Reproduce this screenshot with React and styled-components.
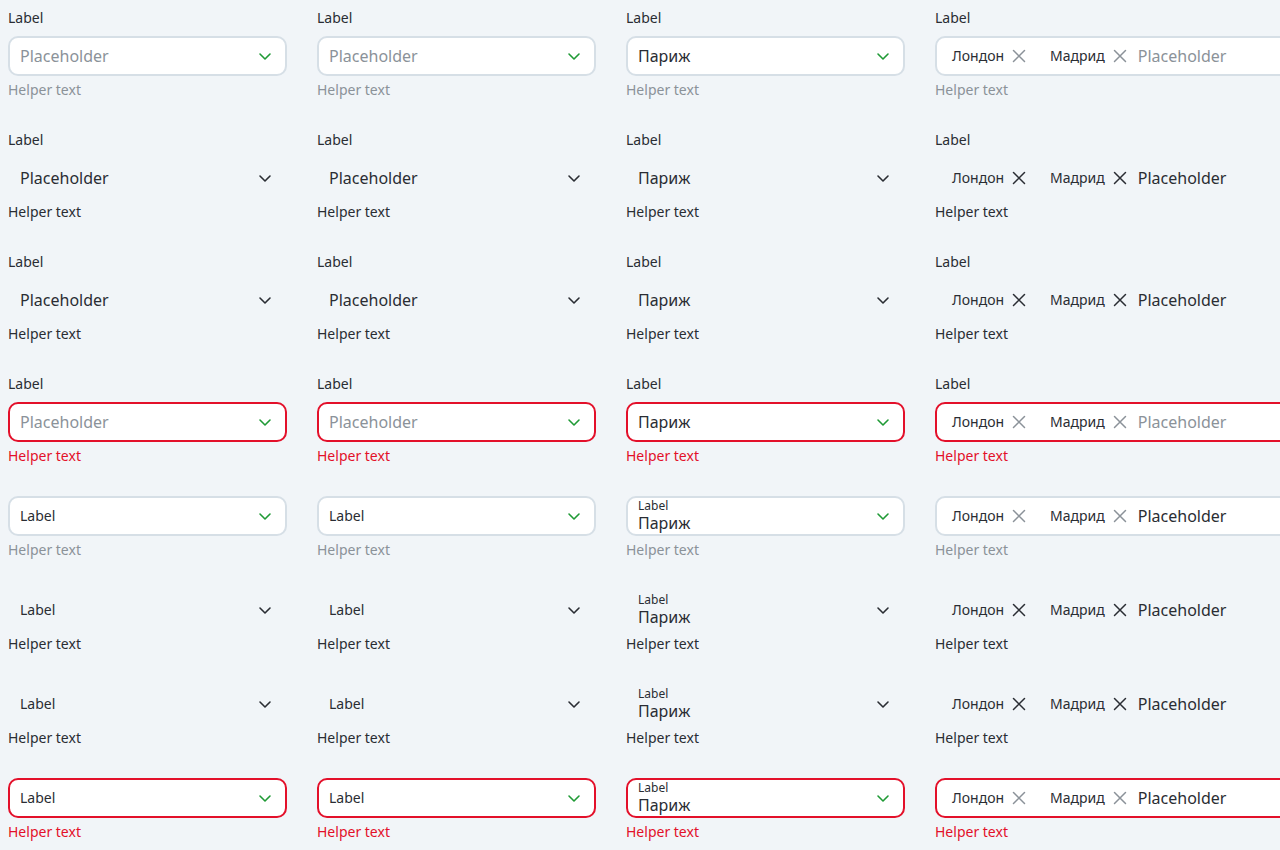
import React from "react";
import styled, { createGlobalStyle, css } from "styled-components";

const GlobalStyle = createGlobalStyle`
  html, body {
    overflow: hidden;
  }
  body {
    margin: 8px 0 8px 8px;
    background-color: #f1f5f8;
    font-family: "Noto Sans", "Open Sans", sans-serif;
    color: #2a2d33;
  }
`;

const COLORS = {
  text: "#2a2d33",
  muted: "#8b9299",
  border: "#d6dfe6",
  error: "#e3102a",
  green: "#1f9a35",
};

const ROW_STATES = ["default", "plain", "plain", "error"];

const Chevron = ({ color }) => (
  <svg width="16" height="16" viewBox="0 0 16 16" fill="none">
    <path d="M3 6l5 5 5-5" stroke={color} strokeWidth="1.6" strokeLinecap="round" strokeLinejoin="round" />
  </svg>
);

const Cross = ({ color }) => (
  <svg width="16" height="16" viewBox="0 0 16 16" fill="none">
    <path d="M2.5 2.5l11 11M13.5 2.5l-11 11" stroke={color} strokeWidth="1.5" strokeLinecap="round" />
  </svg>
);

const SelectField = ({ state, inner, kind }) => {
  const plain = state === "plain";
  const iconColor = plain ? COLORS.text : COLORS.green;
  const crossColor = plain ? COLORS.text : COLORS.muted;
  const emptyLook = !plain && !inner;

  let content;
  if (kind === "chips") {
    content = (
      <Chips>
        {["Лондон", "Мадрид"].map((city) => (
          <Chip key={city}>
            {city}
            <Cross color={crossColor} />
          </Chip>
        ))}
        <Value muted={emptyLook}>Placeholder</Value>
      </Chips>
    );
  } else if (kind === "value") {
    content = (
      <Stack>
        {inner && <InnerLabel>Label</InnerLabel>}
        <Value>Париж</Value>
      </Stack>
    );
  } else if (inner) {
    content = <SmallText>Label</SmallText>;
  } else {
    content = <Value muted={emptyLook}>Placeholder</Value>;
  }

  return (
    <Group>
      {!inner && <OuterLabel>Label</OuterLabel>}
      <Field state={state}>
        {content}
        {kind !== "chips" && <Chevron color={iconColor} />}
      </Field>
      <Helper state={state}>Helper text</Helper>
    </Group>
  );
};

export default function App() {
  const rows = [
    ...ROW_STATES.map((state) => ({ state, inner: false })),
    ...ROW_STATES.map((state) => ({ state, inner: true })),
  ];
  return (
    <>
      <GlobalStyle />
      <Grid>
        {rows.map((row, i) =>
          ["empty", "empty", "value", "chips"].map((kind, j) => (
            <SelectField key={`${i}-${j}`} state={row.state} inner={row.inner} kind={kind} />
          ))
        )}
      </Grid>
    </>
  );
}

const Grid = styled.div`
  display: grid;
  grid-template-columns: repeat(3, 279px) 360px;
  column-gap: 30px;
  row-gap: 30px;
`;

const Group = styled.div`
  display: flex;
  flex-direction: column;
`;

const OuterLabel = styled.div`
  font-size: 14px;
  line-height: 20px;
  margin-bottom: 8px;
  color: ${COLORS.text};
`;

const Field = styled.div`
  height: 40px;
  box-sizing: border-box;
  display: flex;
  align-items: center;
  justify-content: space-between;
  padding: 0 12px 0 10px;
  border-radius: 10px;
  border: 2px solid transparent;
  background-color: transparent;

  ${({ state }) =>
    state === "default" &&
    css`
      background-color: #fff;
      border-color: ${COLORS.border};
    `}
  ${({ state }) =>
    state === "error" &&
    css`
      background-color: #fff;
      border-color: ${COLORS.error};
    `}
`;

const Stack = styled.div`
  display: flex;
  flex-direction: column;
`;

const InnerLabel = styled.span`
  font-size: 12px;
  line-height: 14px;
  color: ${COLORS.text};
`;

const Value = styled.span`
  font-size: 16px;
  line-height: 20px;
  color: ${({ muted }) => (muted ? COLORS.muted : COLORS.text)};
  white-space: nowrap;
`;

const Chips = styled.div`
  display: flex;
  align-items: center;
  gap: 10px;
`;

const Chip = styled.span`
  display: inline-flex;
  align-items: center;
  gap: 7px;
  padding-left: 5px;
  font-size: 14px;
  line-height: 20px;
  color: ${COLORS.text};

  & + & {
    margin-left: 8px;
  }
`;

const SmallText = styled.span`
  font-size: 14px;
  line-height: 20px;
  color: ${COLORS.text};
`;

const Helper = styled.div`
  font-size: 14px;
  line-height: 20px;
  margin-top: 4px;
  color: ${({ state }) =>
    state === "error" ? COLORS.error : state === "plain" ? COLORS.text : COLORS.muted};
`;
